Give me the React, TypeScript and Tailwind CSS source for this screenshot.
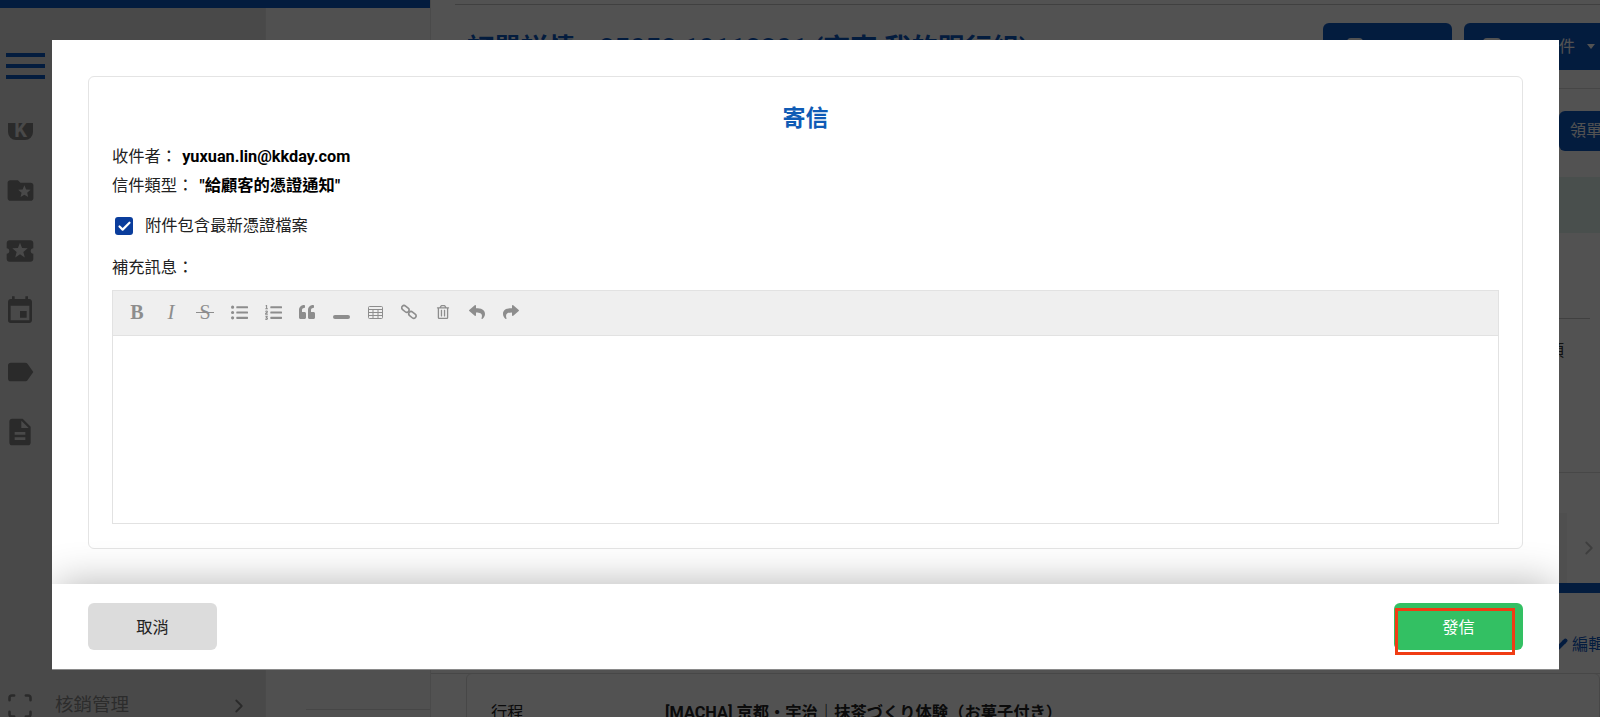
import React from "react";
import { Check, ChevronRight, Scan, Pencil } from "lucide-react";
import { MdFolderSpecial, MdLocalActivity, MdEvent, MdLabel, MdDescription } from "react-icons/md";
import { FaListUl, FaListOl, FaQuoteLeft, FaReply, FaShare, FaRegTrashAlt } from "react-icons/fa";

const font = "font-['Roboto','Noto_Sans_CJK_TC',sans-serif]";

function Tool({ children }: { children: React.ReactNode }) {
  return <div className="w-[34px] h-[42px] flex items-center justify-center text-[#8d8d8d] shrink-0">{children}</div>;
}

function TableIcon() {
  return (
    <svg width="15" height="13" viewBox="0 0 15 13" fill="none" stroke="currentColor" strokeWidth="1">
      <rect x="0.5" y="0.5" width="14" height="12" rx="1" />
      <path d="M0.5 3.5h14M0.5 6.5h14M0.5 9.5h14M5 3.5v9M10 3.5v9" />
    </svg>
  );
}

function LinkIcon() {
  return (
    <svg width="16" height="16" viewBox="0 0 16 16" fill="none" stroke="currentColor" strokeWidth="1.6">
      <rect x="0.4" y="2.6" width="8" height="4.6" rx="2.3" transform="rotate(40 4.4 4.9)" />
      <rect x="7.4" y="8.6" width="8" height="4.6" rx="2.3" transform="rotate(40 11.4 10.9)" />
    </svg>
  );
}

function Toolbar() {
  return (
    <div className="h-[45px] bg-[#efefef] border-b border-[#e2e2e2] pl-[7px] flex items-start">
      <Tool><span className="font-['Liberation_Serif',serif] font-bold text-[20px] leading-none">B</span></Tool>
      <Tool><span className="font-['Liberation_Serif',serif] italic text-[21px] leading-none">I</span></Tool>
      <Tool>
        <span className="relative font-['Liberation_Serif',serif] text-[20px] leading-none">
          S
          <span className="absolute left-[-3px] right-[-3px] top-[10px] h-px bg-[#8d8d8d]" />
        </span>
      </Tool>
      <Tool><FaListUl size={17} /></Tool>
      <Tool><FaListOl size={17} /></Tool>
      <Tool><FaQuoteLeft size={16} /></Tool>
      <Tool><span className="mt-[10px] w-[17px] h-[4px] rounded-full bg-[#8d8d8d]" /></Tool>
      <Tool><TableIcon /></Tool>
      <Tool><LinkIcon /></Tool>
      <Tool><FaRegTrashAlt size={14} /></Tool>
      <Tool><FaReply size={16} /></Tool>
      <Tool><FaShare size={16} /></Tool>
    </div>
  );
}

function Modal() {
  return (
    <div className="absolute left-[52px] top-[40px] w-[1507px] h-[630px] bg-white flex flex-col overflow-hidden border-b border-[#8a8a8a]">
      <div className="flex-1 px-[36px] pt-[36px]">
        <div className="h-[473px] rounded-md border border-[#e4e4e4] px-[23px] pt-[27px] text-[#222] text-[16.3px]">
          <div className="text-center text-[23px] leading-[30px] font-bold text-[#0f5bb5]">寄信</div>
          <div className="mt-[8px] leading-[29px]">
            收件者： <span className="ml-px font-bold text-black">yuxuan.lin@kkday.com</span>
          </div>
          <div className="leading-[29px]">
            信件類型： <span className="ml-0.5 font-bold text-black">"給顧客的憑證通知"</span>
          </div>
          <div className="mt-[12px] h-[28px] flex items-center pl-[3px] gap-[12px]">
            <div className="w-[18px] h-[18px] rounded-[3px] bg-[#0a3d9c] flex items-center justify-center">
              <Check size={15} strokeWidth={3.5} className="text-white" />
            </div>
            <span>附件包含最新憑證檔案</span>
          </div>
          <div className="mt-[16px] leading-[24px]">補充訊息：</div>
          <div className="mt-[10px] h-[234px] border border-[#e2e2e2]">
            <Toolbar />
          </div>
        </div>
      </div>
      <div className="h-[85px] bg-white px-[36px] pt-[19px] flex justify-between items-start shadow-[0_-4px_40px_-4px_rgba(0,0,0,0.3)] relative text-[16.3px]">
        <button className="w-[129px] h-[47px] pt-[3px] rounded-md bg-[#dcdcdc] text-[#222]">取消</button>
        <div className="relative">
          <button className="w-[129px] h-[47px] pt-[3px] rounded-md bg-[#33c063] text-white">發信</button>
          <div className="absolute left-[1px] top-[5px] w-[120px] h-[47px] border-[3px] border-[#f03c14]" />
        </div>
      </div>
    </div>
  );
}

function SideIcon({ children }: { children: React.ReactNode }) {
  return <div className="h-[60.5px] w-[40px] flex items-center justify-center text-[#838383]">{children}</div>;
}

function Sidebar() {
  return (
    <div className="w-[430px] shrink-0 flex flex-col h-full">
      <div className="h-2 bg-[#0c57c2] shrink-0" />
      <div className="flex-1 flex min-h-0">
        <div className="w-[265px] bg-[#e3e3e3] flex flex-col relative">
          <div className="mt-[45px] ml-[6px] w-[39px] flex flex-col gap-[7px]">
            <div className="h-1 bg-[#0c57c2]" />
            <div className="h-1 bg-[#0c57c2]" />
            <div className="h-1 bg-[#0c57c2]" />
          </div>
          <div className="mt-[44px] h-[17px] ml-[8px] w-[25px] rounded-b-lg bg-[#838383] overflow-hidden flex items-end justify-center text-[#e3e3e3] font-bold text-[20px] leading-none font-['Roboto',sans-serif]">K</div>
          <div className="mt-[20px]">
            <SideIcon><MdFolderSpecial size={31} /></SideIcon>
            <SideIcon><MdLocalActivity size={32} /></SideIcon>
            <SideIcon><MdEvent size={32} /></SideIcon>
            <SideIcon><MdLabel size={32} /></SideIcon>
            <SideIcon><MdDescription size={32} /></SideIcon>
          </div>
          <div className="mt-auto h-[22px] flex items-center pl-[6px] text-[#838383]">
            <Scan size={28} strokeWidth={2.2} />
            <span className="ml-[21px] text-[18.5px] text-[#8a8a8a]">核銷管理</span>
            <ChevronRight size={22} className="ml-auto mr-[15px]" />
          </div>
        </div>
        <div className="flex-1 bg-[#f8f8f8] border-l border-[#e6e6e6] flex flex-col justify-end pb-[7px] pl-[40px]">
          <div className="border-b border-[#d8d8d8]" />
        </div>
      </div>
    </div>
  );
}

function Main() {
  return (
    <div className="flex-1 min-w-0 bg-white h-full overflow-hidden flex flex-col border-l border-[#e6e6e6]">
      <div className="ml-[24px] h-[5px] shrink-0 border-b border-[#c8c8c8]" />
      <div className="h-[84px] shrink-0 ml-[24px] pl-[12px] pt-[18px] flex items-start border-b border-[#d8d8d8] gap-[12px]">
        <div className="flex-1 min-w-0 whitespace-nowrap pt-[8px] text-[27px] leading-[36px] font-bold text-[#0c57c2]">訂單詳情 - 25052 10112301 (京東 我的跟行組)</div>
        <div className="w-[129px] h-[47px] rounded-md bg-[#0c57c2] shrink-0 pl-[24px] pt-[15px]">
          <div className="w-[16px] h-[18px] rounded-sm bg-white" />
        </div>
        <div className="w-[136px] h-[47px] rounded-l-md bg-[#0c57c2] shrink-0 pl-[19px] pr-[5px] flex items-center text-white text-[16px]">
          <div className="self-start mt-[15px] w-[18px] h-[18px] rounded-sm bg-white" />
          <span className="ml-auto">件</span>
          <span className="ml-[12px] border-x-[4px] border-x-transparent border-t-[5px] border-t-white" />
        </div>
      </div>
      <div className="h-[40px] mt-[22px] shrink-0 flex justify-end">
        <div className="w-[41px] rounded-l-md bg-[#0c57c2] text-white text-[16px] leading-[40px] pl-[11px] whitespace-nowrap overflow-hidden shrink-0">領單</div>
      </div>
      <div className="h-[56px] mt-[26px] shrink-0 bg-[#e2f4ee]" />
      <div className="h-[86px] shrink-0 mr-[10px] border-b border-[#c8c8c8]" />
      <div className="h-[154px] shrink-0 flex justify-end pr-[36px] pt-[20px] text-[16px] leading-[24px] text-[#333] border-b border-[#dedede]">項</div>
      <div className="h-[40px] shrink-0" />
      <div className="h-[70px] shrink-0 flex">
        <div className="flex-1 bg-[#f4f4f4]" />
        <div className="w-[33px] pt-[24px] pl-[11px] text-[#c0c0c0]">
          <ChevronRight size={22} />
        </div>
      </div>
      <div className="h-[10px] shrink-0 bg-[#0c57c2]" />
      <div className="h-[81px] shrink-0 flex items-start justify-end pt-[40px] text-[#0c57c2] text-[16.3px] leading-[24px] border-b border-[#dedede]">
        <Pencil size={13} className="mr-[4px] mt-[5px]" fill="currentColor" />
        <span className="w-[28px] overflow-hidden whitespace-nowrap">編輯</span>
      </div>
      <div className="ml-[35px] mt-[-1px] flex-1 border border-[#dedede] rounded-t-md pl-[24px] pt-[27px] flex text-[16.3px] leading-[24px] text-[#222] whitespace-nowrap">
        <span className="w-[174px]">行程</span>
        <span className="font-bold">[MACHA] 京都・宇治｜抹茶づくり体験（お菓子付き）</span>
      </div>
    </div>
  );
}

export default function App() {
  return (
    <div className={`relative w-full h-screen overflow-hidden flex ${font}`}>
      <Sidebar />
      <Main />
      <div className="absolute inset-0 bg-black/[0.68]" />
      <Modal />
    </div>
  );
}
